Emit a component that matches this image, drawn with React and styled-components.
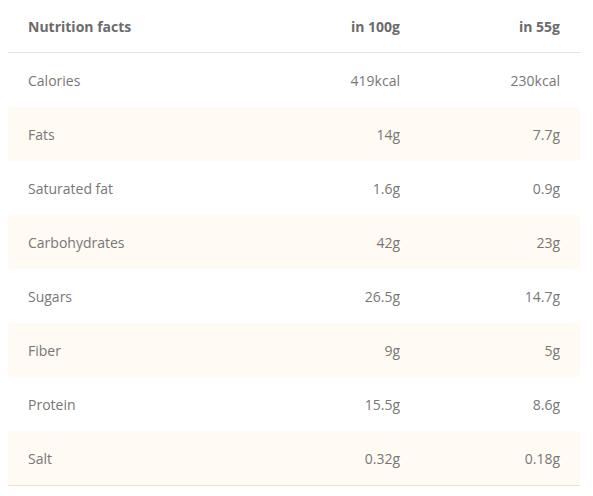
import styled, { createGlobalStyle } from "styled-components";

const GlobalStyle = createGlobalStyle`
  body {
    margin: 0;
    padding: 0 8px;
    background: #ffffff;
    font-family: "Open Sans", "Liberation Sans", sans-serif;
  }
`;

const Table = styled.table`
  width: 572px;
  border-collapse: collapse;
  font-size: 14px;
  color: #777777;
`;

const HeadCell = styled.th`
  height: 52px;
  padding: 0 20px;
  text-align: ${(p) => (p.$right ? "right" : "left")};
  font-weight: 700;
  color: #6b6b6b;
  border-bottom: 1px solid #ebe2d6;
  vertical-align: middle;
`;

const Row = styled.tr`
  background: ${(p) => (p.$striped ? "#fffaf4" : "#ffffff")};
  border-bottom: ${(p) => (p.$last ? "1px solid #ede0cb" : "none")};
`;

const Cell = styled.td`
  height: 54px;
  padding: 0 20px;
  text-align: ${(p) => (p.$right ? "right" : "left")};
  font-weight: 400;
  vertical-align: middle;
`;

const rows = [
  ["Calories", "419kcal", "230kcal"],
  ["Fats", "14g", "7.7g"],
  ["Saturated fat", "1.6g", "0.9g"],
  ["Carbohydrates", "42g", "23g"],
  ["Sugars", "26.5g", "14.7g"],
  ["Fiber", "9g", "5g"],
  ["Protein", "15.5g", "8.6g"],
  ["Salt", "0.32g", "0.18g"],
];

export default function App() {
  return (
    <>
      <GlobalStyle />
      <Table>
        <colgroup>
          <col />
          <col style={{ width: "152px" }} />
          <col style={{ width: "160px" }} />
        </colgroup>
        <thead>
          <tr>
            <HeadCell>Nutrition facts</HeadCell>
            <HeadCell $right>in 100g</HeadCell>
            <HeadCell $right>in 55g</HeadCell>
          </tr>
        </thead>
        <tbody>
          {rows.map(([name, per100, perServing], i) => (
            <Row key={name} $striped={i % 2 === 1} $last={i === rows.length - 1}>
              <Cell>{name}</Cell>
              <Cell $right>{per100}</Cell>
              <Cell $right>{perServing}</Cell>
            </Row>
          ))}
        </tbody>
      </Table>
    </>
  );
}
